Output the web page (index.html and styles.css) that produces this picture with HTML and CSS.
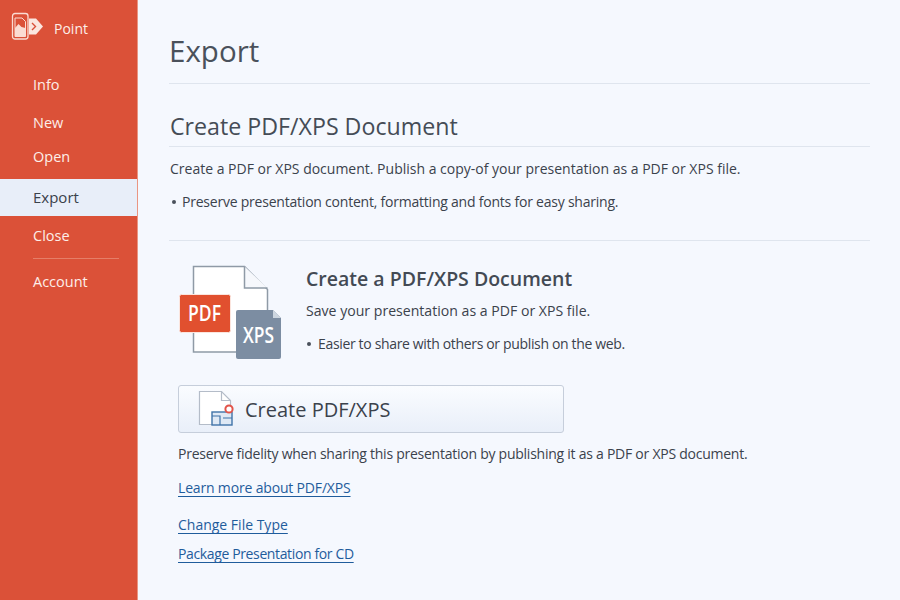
FILE: index.html
```html
<!DOCTYPE html>
<html lang="en">
<head>
<meta charset="utf-8">
<title>Export</title>
<link rel="stylesheet" href="styles.css">
</head>
<body>
<div class="app">
  <aside class="side">
    <div class="brand">
      <svg class="brand-icon" width="33" height="29" viewBox="0 0 33 29" fill="none">
        <rect x="1.500" y="1.500" width="15.500" height="25.500" rx="2.500" stroke="#fbdcd3" stroke-width="1.300"/>
        <path d="M4 6h7l3.500 3.500V24.500H4z" stroke="#fbdcd3" stroke-width="1"/>
        <path d="M4 24.500V16l3.500-4 3 3 4 1v8.500z" fill="#fbdcd3"/>
        <path d="M18 6.500h7l7 8-7 8h-7z" fill="#fbe6df"/>
        <path d="M21 11l3.500 3.500L21 18" stroke="#d9503a" stroke-width="1.400"/>
      </svg>
      <span>Point</span>
    </div>
    <nav class="nav">
      <a class="nav-item info">Info</a>
      <a class="nav-item new">New</a>
      <a class="nav-item open">Open</a>
      <a class="nav-item active">Export</a>
      <a class="nav-item close">Close</a>
      <div class="nav-rule"></div>
      <a class="nav-item account">Account</a>
    </nav>
  </aside>
  <main class="main">
    <h1 class="title">Export</h1>
    <h2 class="section-title">Create PDF/XPS Document</h2>
    <p class="lead">Create a PDF or XPS document. Publish a copy-of your presentation as a PDF or XPS file.</p>
    <p class="lead-bullet"><span class="dot"></span>Preserve presentation content, formatting and fonts for easy sharing.</p>
    <section class="feature">
      <svg class="doc-art" width="103" height="95" viewBox="0 0 103 95" fill="none">
        <path d="M14.500 1.500h51l23 23v62.500h-74z" fill="#fff" stroke="#8f9aa6" stroke-width="1.500"/>
        <path d="M65.500 1.500v21.500h23" fill="#f6f8fc" stroke="#8f9aa6" stroke-width="1.500"/>
        <rect x="0.500" y="29.500" width="51" height="38" rx="2" fill="#e1502f" stroke="#fbe5de"/>
        <path d="M59 45h35l8 8v39a2 2 0 0 1-2 2H59a2 2 0 0 1-2-2V47a2 2 0 0 1 2-2z" fill="#7c8da2"/>
        <path d="M94 45l8 8h-8z" fill="#cdd6e0"/>
        <text x="25.500" y="56" class="art-label" text-anchor="middle" textLength="33" lengthAdjust="spacingAndGlyphs">PDF</text>
        <text x="79.500" y="78" class="art-label" text-anchor="middle" textLength="31" lengthAdjust="spacingAndGlyphs">XPS</text>
      </svg>
      <div class="feature-copy">
        <h3 class="feature-title">Create a PDF/XPS Document</h3>
        <p class="feature-text">Save your presentation as a PDF or XPS file.</p>
        <p class="feature-bullet"><span class="dot small"></span>Easier to share with others or publish on the web.</p>
      </div>
    </section>
    <button class="create-btn" type="button">
      <svg width="38" height="38" viewBox="0 0 38 38" fill="none">
        <path d="M1.500 1.500h22l9 9v24h-31z" fill="#fff" stroke="#b4bcc8" stroke-width="1.200"/>
        <path d="M23.500 1.500v9h9" stroke="#b4bcc8" stroke-width="1.200"/>
        <rect x="14" y="22" width="20" height="13" fill="#dfe9f5" stroke="#3f73a8" stroke-width="1.400"/>
        <path d="M14 26h8v9M25 28h9" stroke="#3f73a8" stroke-width="1.200"/>
        <circle cx="31" cy="19" r="3.600" fill="#fff" stroke="#e2544a" stroke-width="2"/>
      </svg>
      <span>Create PDF/XPS</span>
    </button>
    <p class="note">Preserve fidelity when sharing this presentation by publishing it as a PDF or XPS document.</p>
    <a class="link learn">Learn more about PDF/XPS</a>
    <a class="link change">Change File Type</a>
    <a class="link package">Package Presentation for CD</a>
  </main>
</div>
</body>
</html>
```
FILE: styles.css
```css
* { box-sizing: border-box; }
html, body { margin: 0; height: 100%; }
body {
  font-family: "Open Sans", "Noto Sans", "Liberation Sans", sans-serif;
  background: #f5f8fe;
  color: #3b424c;
  overflow: hidden;
}
.app { display: flex; width: 900px; height: 600px; }
.side {
  width: 138px;
  flex: none;
  background: #db5138;
  color: #fdeee9;
  border-right: 1px solid #ea9582;
}
.brand {
  display: flex;
  align-items: center;
  height: 56px;
  padding-left: 11px;
  gap: 10px;
  font-size: 14px;
}
.brand-icon { margin-bottom: 4px; flex: none; }
.nav { display: flex; flex-direction: column; }
.nav-item {
  display: flex;
  align-items: center;
  padding-left: 33px;
  font-size: 14.500px;
  color: #fdeee9;
}
.info { height: 20px; margin-top: 18px; }
.new { height: 20px; margin-top: 18px; }
.open { height: 20px; margin-top: 14px; }
.nav-item.active {
  height: 37px;
  margin-top: 13px;
  padding-bottom: 2px;
  background: #e8eef9;
  color: #3a414b;
  font-size: 15px;
}
.close { height: 20px; margin-top: 9px; }
.nav-rule { height: 1px; margin: 13px 18px 0 33px; background: #e57e68; }
.account { height: 20px; margin-top: 12px; }
.main { flex: 1; padding: 0 30px 0 31px; min-width: 0; }
.title {
  margin: 0;
  height: 84px;
  padding-top: 29px;
  font-size: 29.500px;
  line-height: 44px;
  font-weight: 400;
  color: #4a515b;
  border-bottom: 1px solid #dfe5ee;
}
.section-title {
  margin: 0;
  height: 63px;
  padding-top: 24px;
  padding-left: 1px;
  font-size: 23.200px;
  line-height: 36px;
  font-weight: 400;
  color: #454c56;
  border-bottom: 1px solid #dfe5ee;
}
.lead { margin: 12px 0 0; padding-left: 1px; font-size: 14px; line-height: 20px; }
.lead-bullet {
  margin: 13px 0 0;
  font-size: 14px;
  letter-spacing: -0.22px;
  line-height: 20px;
  padding-bottom: 28px;
  border-bottom: 1px solid #dfe5ee;
}
.dot {
  display: inline-block;
  width: 4px;
  height: 4px;
  margin: 0 6px 2px 3px;
  border-radius: 50%;
  background: #4a515b;
  vertical-align: middle;
}
.dot.small { margin: 0 7px 2px 1px; }
.feature { display: flex; margin-top: 24px; padding-left: 10px; }
.doc-art { flex: none; margin-right: 24px; overflow: visible; }
.art-label { font: 600 21px "Open Sans", sans-serif; fill: #fff; }
.feature-title {
  margin: 0;
  font-size: 19.500px;
  line-height: 28px;
  font-weight: 600;
  color: #434a54;
}
.feature-text { margin: 8px 0 0; font-size: 14.100px; line-height: 20px; }
.feature-bullet { margin: 13px 0 0; font-size: 14px; letter-spacing: -0.34px; line-height: 20px; }
.create-btn {
  display: flex;
  align-items: center;
  width: 386px;
  height: 48px;
  margin: 25px 0 0 9px;
  padding: 0 0 0 19px;
  gap: 9px;
  border: 1px solid #c6cedb;
  border-radius: 3px;
  background: linear-gradient(#fafcff, #e9eff9);
  font: 400 20px "Open Sans", sans-serif;
  color: #3b424c;
}
.note { margin: 11px 0 0 9px; font-size: 14px; letter-spacing: -0.25px; line-height: 20px; }
.link {
  display: block;
  width: max-content;
  margin-left: 9px;
  font-size: 14px;
  line-height: 19px;
  color: #1f5c9c;
  text-decoration: underline;
  text-underline-offset: 3px;
}
.learn { margin-top: 14px; letter-spacing: -0.17px; }
.change { margin-top: 18px; }
.package { margin-top: 10px; letter-spacing: -0.37px; }
```
